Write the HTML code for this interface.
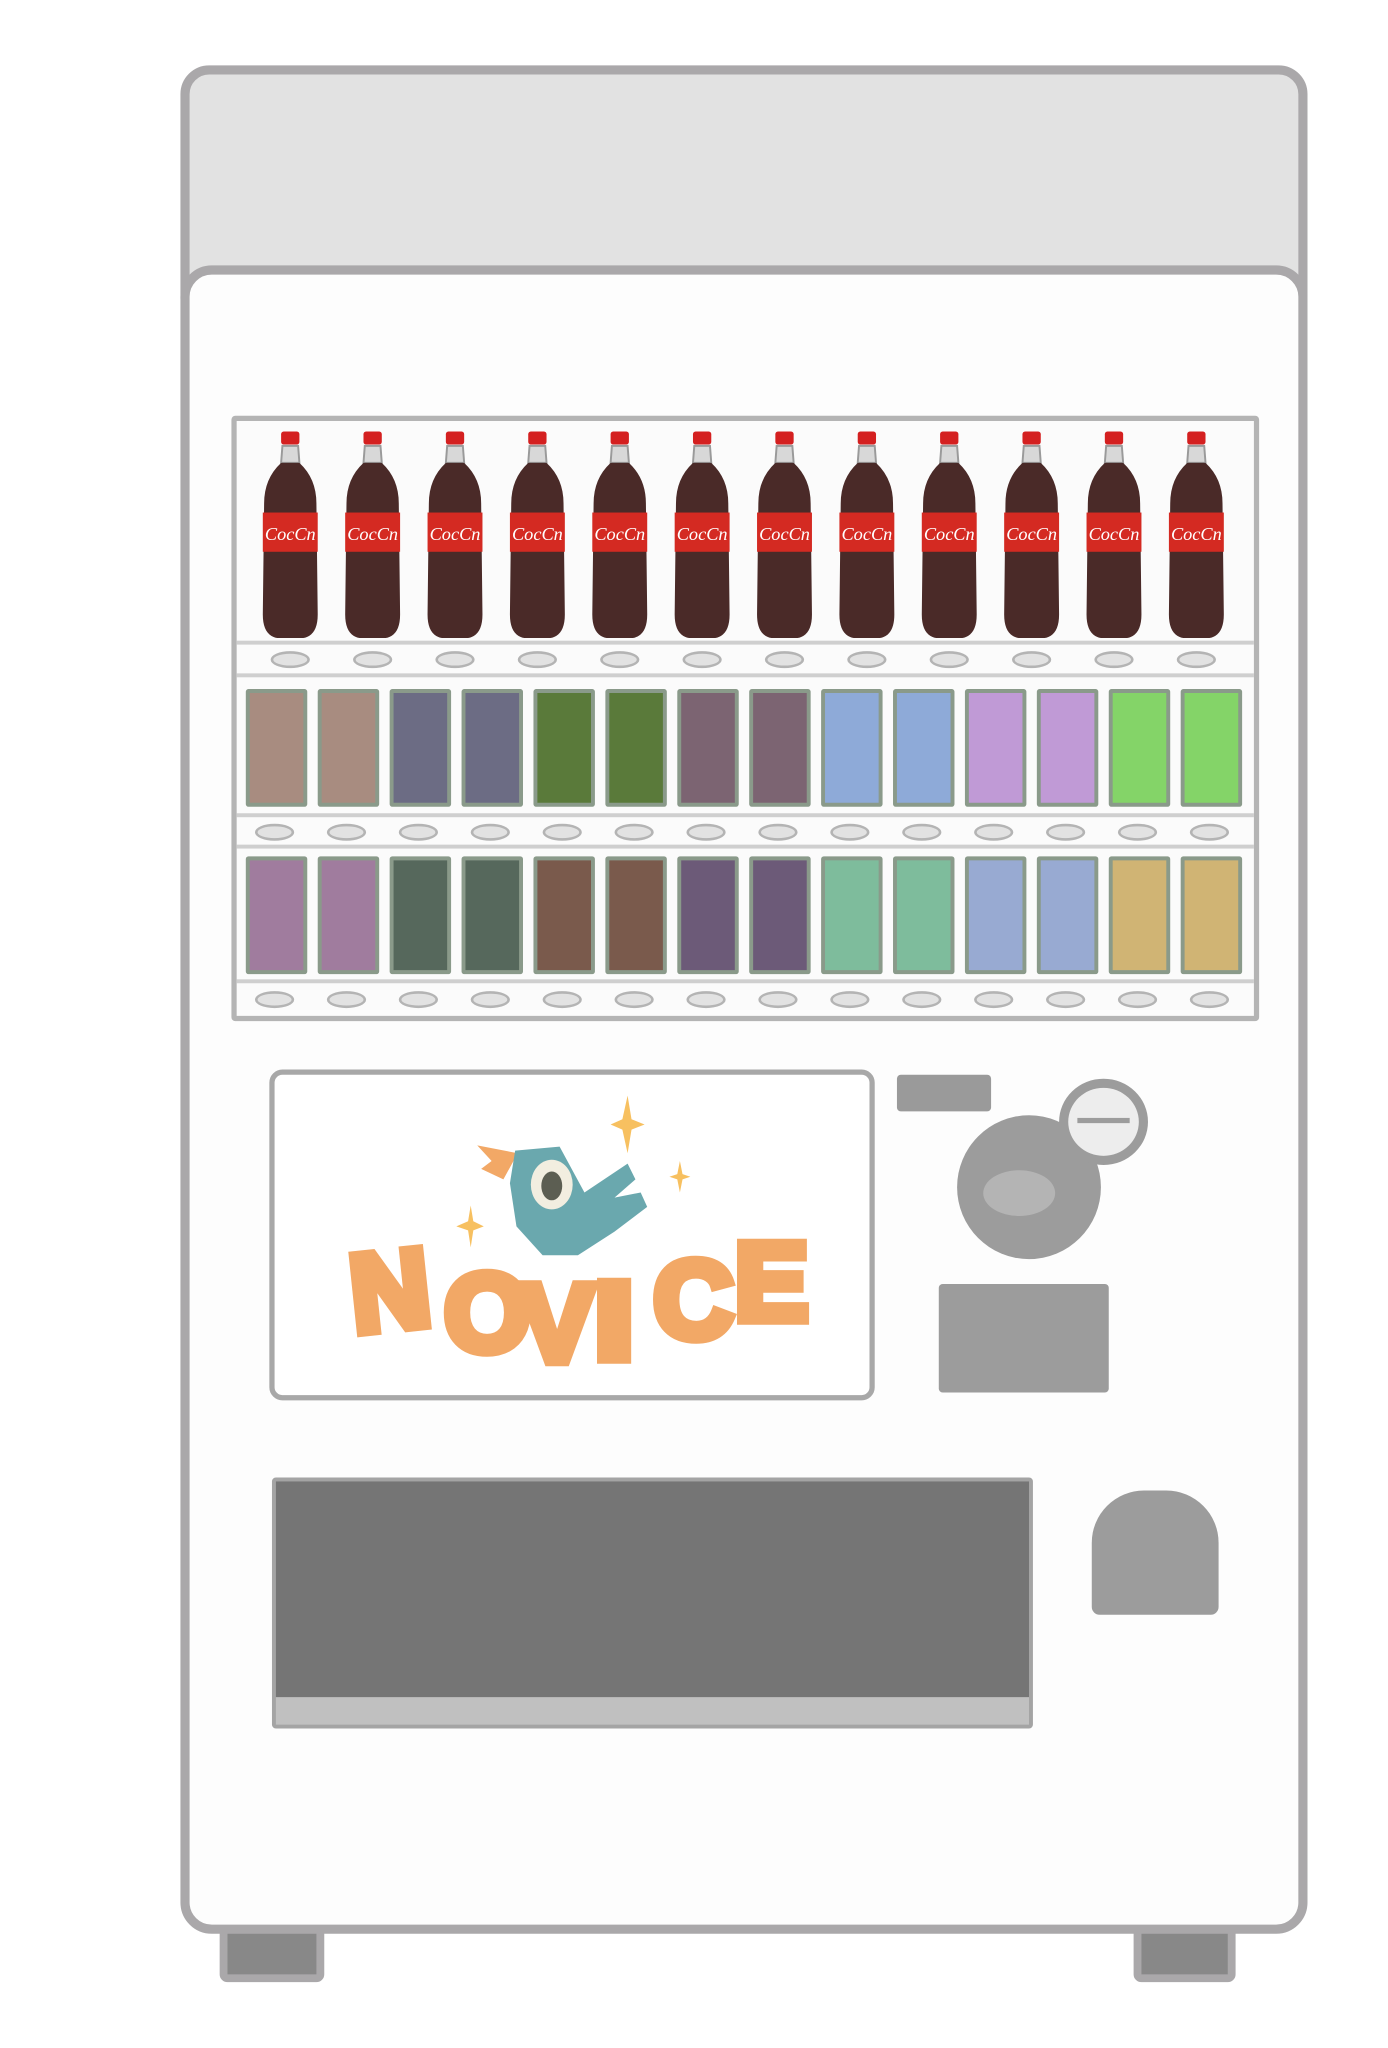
<!DOCTYPE html>
<html><head><meta charset="utf-8"><style>
html,body{margin:0;padding:0;background:#fff;width:1388px;height:2048px;overflow:hidden}
#s{position:absolute;left:0;top:0;width:1052px;height:1552px;transform:scale(1.3075);transform-origin:0 0}
.a{position:absolute;box-sizing:border-box}
.can{position:absolute;width:47px;border:3px solid #8a9a8a;border-radius:2px;box-sizing:border-box;overflow:hidden}
.ov{position:absolute;width:30px;height:13px;border-radius:50%;background:#e2e2e2;border:2px solid #b4b4b4;box-sizing:border-box}
.L{position:absolute;font-family:"Liberation Sans",sans-serif;font-weight:bold;color:#f2a866;font-size:84px;line-height:1;-webkit-text-stroke:8px #f2a866;paint-order:stroke}
</style></head><body><div id="s">
<div class="a" style="left:168px;top:1466px;width:80px;height:50px;background:#888;border:6px solid #aaa8aa;border-radius:6px"></div>
<div class="a" style="left:867px;top:1466px;width:78px;height:50px;background:#888;border:6px solid #aaa8aa;border-radius:6px"></div>
<div class="a" style="left:138px;top:50px;width:862px;height:200px;background:#e2e2e2;border:7px solid #aaa8aa;border-radius:22px"></div>
<div class="a" style="left:138px;top:203px;width:862px;height:1276px;background:#fdfdfd;border:7px solid #aaa8aa;border-radius:24px"></div>
<div class="a" style="left:177px;top:318px;width:786px;height:463px;background:#fbfbfb;border:4px solid #b4b4b4;border-radius:3px"></div>
<div class="a" style="left:181px;top:490px;width:778px;height:3px;background:#cfcfcf"></div>
<div class="a" style="left:181px;top:515px;width:778px;height:3px;background:#cfcfcf"></div>
<div class="a" style="left:181px;top:622px;width:778px;height:3px;background:#cfcfcf"></div>
<div class="a" style="left:181px;top:646px;width:778px;height:3px;background:#cfcfcf"></div>
<div class="a" style="left:181px;top:749px;width:778px;height:3px;background:#cfcfcf"></div>
<svg class="a" style="left:0;top:0" width="1052" height="800">
<defs><g id="b">
<rect x="-7" y="0" width="14" height="10" rx="2" fill="#d42020"/>
<path d="M-6 11 L6 11 L7 24 L-7 24 Z" fill="#d8d8d8" stroke="#9a9a9a" stroke-width="1.5"/>
<path d="M-7 24 L7 24 Q20 36 20 55 L21 140 Q21 156 10 158 L-10 158 Q-21 156 -21 140 L-20 55 Q-20 36 -7 24 Z" fill="#4a2a28"/>
<rect x="-21" y="62" width="42" height="30" fill="#d42a22"/>
<text x="0" y="83" font-family="Liberation Serif,serif" font-style="italic" font-size="14" fill="#fff" text-anchor="middle">CocCn</text>
</g></defs>
<use href="#b" x="222" y="330"/><use href="#b" x="285" y="330"/><use href="#b" x="348" y="330"/><use href="#b" x="411" y="330"/><use href="#b" x="474" y="330"/><use href="#b" x="537" y="330"/><use href="#b" x="600" y="330"/><use href="#b" x="663" y="330"/><use href="#b" x="726" y="330"/><use href="#b" x="789" y="330"/><use href="#b" x="852" y="330"/><use href="#b" x="915" y="330"/>
</svg>
<div class="ov" style="left:207px;top:498px"></div><div class="ov" style="left:270px;top:498px"></div><div class="ov" style="left:333px;top:498px"></div><div class="ov" style="left:396px;top:498px"></div><div class="ov" style="left:459px;top:498px"></div><div class="ov" style="left:522px;top:498px"></div><div class="ov" style="left:585px;top:498px"></div><div class="ov" style="left:648px;top:498px"></div><div class="ov" style="left:711px;top:498px"></div><div class="ov" style="left:774px;top:498px"></div><div class="ov" style="left:837px;top:498px"></div><div class="ov" style="left:900px;top:498px"></div>
<div class="can" style="left:188px;top:527px;height:90px;background:#a88c80"></div><div class="can" style="left:243px;top:527px;height:90px;background:#a88c80"></div>
<div class="can" style="left:298px;top:527px;height:90px;background:#6c6c84"></div><div class="can" style="left:353px;top:527px;height:90px;background:#6c6c84"></div>
<div class="can" style="left:408px;top:527px;height:90px;background:#5a7a3a"></div><div class="can" style="left:463px;top:527px;height:90px;background:#5a7a3a"></div>
<div class="can" style="left:518px;top:527px;height:90px;background:#7c6472"></div><div class="can" style="left:573px;top:527px;height:90px;background:#7c6472"></div>
<div class="can" style="left:628px;top:527px;height:90px;background:#8eaad8"></div><div class="can" style="left:683px;top:527px;height:90px;background:#8eaad8"></div>
<div class="can" style="left:738px;top:527px;height:90px;background:#c09ad6"></div><div class="can" style="left:793px;top:527px;height:90px;background:#c09ad6"></div>
<div class="can" style="left:848px;top:527px;height:90px;background:#84d468"></div><div class="can" style="left:903px;top:527px;height:90px;background:#84d468"></div>
<div class="ov" style="left:195px;top:630px"></div><div class="ov" style="left:250px;top:630px"></div><div class="ov" style="left:305px;top:630px"></div><div class="ov" style="left:360px;top:630px"></div><div class="ov" style="left:415px;top:630px"></div><div class="ov" style="left:470px;top:630px"></div><div class="ov" style="left:525px;top:630px"></div><div class="ov" style="left:580px;top:630px"></div><div class="ov" style="left:635px;top:630px"></div><div class="ov" style="left:690px;top:630px"></div><div class="ov" style="left:745px;top:630px"></div><div class="ov" style="left:800px;top:630px"></div><div class="ov" style="left:855px;top:630px"></div><div class="ov" style="left:910px;top:630px"></div>
<div class="can" style="left:188px;top:655px;height:90px;background:#a07c9e"></div><div class="can" style="left:243px;top:655px;height:90px;background:#a07c9e"></div>
<div class="can" style="left:298px;top:655px;height:90px;background:#56685c"></div><div class="can" style="left:353px;top:655px;height:90px;background:#56685c"></div>
<div class="can" style="left:408px;top:655px;height:90px;background:#7a5a4c"></div><div class="can" style="left:463px;top:655px;height:90px;background:#7a5a4c"></div>
<div class="can" style="left:518px;top:655px;height:90px;background:#6c5a78"></div><div class="can" style="left:573px;top:655px;height:90px;background:#6c5a78"></div>
<div class="can" style="left:628px;top:655px;height:90px;background:#7ebc9c"></div><div class="can" style="left:683px;top:655px;height:90px;background:#7ebc9c"></div>
<div class="can" style="left:738px;top:655px;height:90px;background:#98aad2"></div><div class="can" style="left:793px;top:655px;height:90px;background:#98aad2"></div>
<div class="can" style="left:848px;top:655px;height:90px;background:#d0b474"></div><div class="can" style="left:903px;top:655px;height:90px;background:#d0b474"></div>
<div class="ov" style="left:195px;top:758px"></div><div class="ov" style="left:250px;top:758px"></div><div class="ov" style="left:305px;top:758px"></div><div class="ov" style="left:360px;top:758px"></div><div class="ov" style="left:415px;top:758px"></div><div class="ov" style="left:470px;top:758px"></div><div class="ov" style="left:525px;top:758px"></div><div class="ov" style="left:580px;top:758px"></div><div class="ov" style="left:635px;top:758px"></div><div class="ov" style="left:690px;top:758px"></div><div class="ov" style="left:745px;top:758px"></div><div class="ov" style="left:800px;top:758px"></div><div class="ov" style="left:855px;top:758px"></div><div class="ov" style="left:910px;top:758px"></div>
<div class="a" style="left:206px;top:818px;width:463px;height:253px;background:#fff;border:4px solid #a8a8a8;border-radius:10px"></div>
<svg class="a" style="left:340px;top:830px" width="200" height="150">
<path d="M140 8 L143 26 L153 30 L143 34 L140 52 L136 34 L127 30 L136 26 Z" fill="#f7c060"/>
<path d="M180 58 L182 68 L188 70 L182 72 L180 82 L178 72 L172 70 L178 68 Z" fill="#f7c060"/>
<path d="M20 92 L22 104 L30 108 L22 111 L20 124 L18 111 L9 108 L18 104 Z" fill="#f7c060"/>
<path d="M25 46 L56 52 L45 72 L28 64 L36 58 Z" fill="#f2a866"/>
<path d="M54 50 L88 47 L107 82 L140 60 L146 72 L130 86 L150 82 L155 93 L130 112 L102 130 L75 130 L55 108 L50 75 Z" fill="#6aa8ae"/>
<ellipse cx="82" cy="76" rx="16" ry="19" fill="#f2eee0"/>
<ellipse cx="82" cy="77" rx="8" ry="11" fill="#5c5e52"/>
</svg>
<div class="L" style="left:268px;top:945px;transform:rotate(-6deg)">N</div>
<div class="L" style="left:340px;top:962px">O</div>
<div class="L" style="left:398px;top:970px">V</div>
<div class="L" style="left:458px;top:968px;transform:scaleX(1.3)">I</div>
<div class="L" style="left:500px;top:952px">C</div>
<div class="L" style="left:562px;top:938px">E</div>
<div class="a" style="left:686px;top:822px;width:72px;height:28px;background:#9a9a9a;border-radius:3px"></div>
<div class="a" style="left:732px;top:853px;width:110px;height:110px;background:#9c9c9c;border-radius:50%"></div>
<div class="a" style="left:752px;top:895px;width:55px;height:35px;background:#b4b4b4;border-radius:50%"></div>
<div class="a" style="left:810px;top:825px;width:68px;height:66px;background:#ededed;border:7px solid #9c9c9c;border-radius:50%"></div>
<div class="a" style="left:824px;top:855px;width:40px;height:4px;background:#9c9c9c"></div>
<div class="a" style="left:718px;top:982px;width:130px;height:83px;background:#9c9c9c;border-radius:3px"></div>
<div class="a" style="left:208px;top:1130px;width:582px;height:192px;background:#c0c0c0;border:3px solid #a4a4a4;border-radius:3px"></div>
<div class="a" style="left:211px;top:1133px;width:576px;height:165px;background:#757575"></div>
<div class="a" style="left:835px;top:1140px;width:97px;height:95px;background:#9c9c9c;border-radius:40px 40px 6px 6px"></div>
</div></body></html>
